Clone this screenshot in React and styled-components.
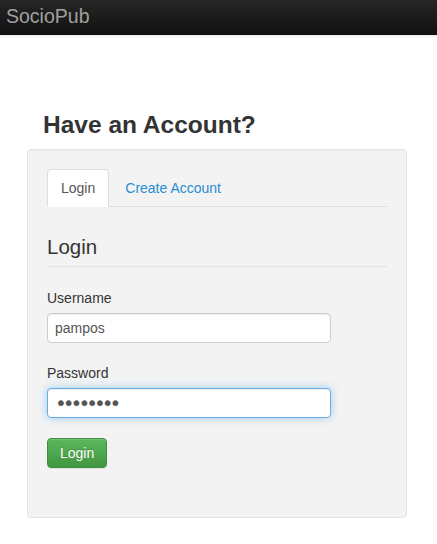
import React, {useEffect, useRef, useState} from "react";
import styled, {createGlobalStyle} from "styled-components";

const GlobalStyle = createGlobalStyle`
body {
    margin: 0;
    background: #fff;
    font-family: "Liberation Sans", Arial, sans-serif;
    font-size: 14px;
    line-height: 20px;
    color: #333;
}
`

const Navbar = styled.div`
height: 35px;
background: linear-gradient(to bottom, #262626 0%, #101010 100%);
box-shadow: 0 1px 3px rgba(0, 0, 0, .12);
display: flex;
align-items: center;
padding-left: 6px;
`

const Brand = styled.a`
font-size: 19.5px;
color: #a0a0a0;
text-decoration: none;
line-height: 24px;
margin-top: -3px;
`

const Main = styled.div`
width: 380px;
padding: 77px 0 0 27px;
`

const Title = styled.h2`
margin: 0 0 10px 16px;
font-size: 24.5px;
line-height: 26.5px;
font-weight: bold;
color: #333;
`

const Well = styled.div`
background: #f3f3f3;
border: 1px solid #e3e3e3;
border-radius: 4px;
padding: 19px 19px 49px;
box-shadow: inset 0 1px 1px rgba(0, 0, 0, .03);
`

const Tabs = styled.ul`
display: flex;
list-style: none;
margin: 0;
padding: 0;
border-bottom: 1px solid #ddd;
`

const Tab = styled.li`
margin-bottom: -1px;
margin-right: 2px;
`

const TabLink = styled.a`
display: block;
padding: 8px 13px 8px 13px;
border: 1px solid ${props => props.active ? "#ddd" : "transparent"};
border-bottom-color: ${props => props.active ? "#fff" : "transparent"};
border-radius: 4px 4px 0 0;
background: ${props => props.active ? "#fff" : "transparent"};
color: ${props => props.active ? "#555" : "#2a8dd4"};
text-decoration: none;
cursor: pointer;
`

const Legend = styled.h3`
margin: 29px 0 0;
padding-bottom: 8px;
font-size: 20.5px;
line-height: 22.5px;
font-weight: normal;
color: #333;
border-bottom: 1px solid #e2e2e2;
`

const Form = styled.form`
display: flex;
flex-direction: column;
align-items: flex-start;
padding-top: 21px;
gap: 20px;
`

const Field = styled.div`
display: flex;
flex-direction: column;
gap: 5px;
`

const Label = styled.label`
font-size: 14px;
line-height: 20px;
color: #333;
`

const Input = styled.input`
box-sizing: border-box;
width: 284px;
height: 30px;
padding: 0 7px;
font-family: ${props => props.type === "password" ? `"DejaVu Sans", sans-serif` : `"Liberation Sans", Arial, sans-serif`};
font-size: ${props => props.type === "password" ? "20px" : "14px"};
letter-spacing: ${props => props.type === "password" ? "-4px" : "normal"};
color: #555;
background: #fff;
border: 1px solid ${props => props.focused ? "#66afe9" : "#ccc"};
border-radius: 4px;
outline: none;
box-shadow: ${props => props.focused
    ? "inset 0 1px 1px rgba(0,0,0,.075), 0 0 8px rgba(102,175,233,.6)"
    : "inset 0 1px 1px rgba(0,0,0,.075)"};
caret-color: #333;
`

const Button = styled.button`
height: 30px;
padding: 0 12px;
font-family: "Liberation Sans", Arial, sans-serif;
font-size: 14px;
color: #fff;
background: linear-gradient(to bottom, #5cb85c 0%, #419641 100%);
border: 1px solid #3e8f3e;
border-radius: 4px;
text-shadow: 0 -1px 0 rgba(0, 0, 0, .2);
box-shadow: inset 0 1px 0 rgba(255,255,255,.15), 0 1px 1px rgba(0,0,0,.075);
cursor: pointer;
`

export default function App() {
    const [tab, setTab] = useState("login");
    const [Values, setValues] = useState({username: "pampos", password: "12345678"});
    const passwordRef = useRef(null);

    useEffect(() => {
        const el = passwordRef.current;
        if (el) {
            el.focus();
            el.setSelectionRange(el.value.length, el.value.length);
        }
    }, []);

    const handleChange = event => {
        setValues({...Values, [event.target.name]: event.target.value})
    }

    return (
        <>
        <GlobalStyle/>
        <Navbar>
            <Brand href="#">SocioPub</Brand>
        </Navbar>
        <Main>
            <Title>Have an Account?</Title>
            <Well>
                <Tabs>
                    <Tab><TabLink active={tab === "login"} onClick={() => setTab("login")}>Login</TabLink></Tab>
                    <Tab><TabLink active={tab === "create"} onClick={() => setTab("create")}>Create Account</TabLink></Tab>
                </Tabs>
                <Legend>Login</Legend>
                <Form onSubmit={e => e.preventDefault()}>
                    <Field>
                        <Label htmlFor="username">Username</Label>
                        <Input id="username" name="username" value={Values.username} onChange={handleChange}/>
                    </Field>
                    <Field>
                        <Label htmlFor="password">Password</Label>
                        <Input id="password" type="password" name="password" focused ref={passwordRef}
                            value={Values.password} onChange={handleChange}/>
                    </Field>
                    <Button type="submit">Login</Button>
                </Form>
            </Well>
        </Main>
        </>
    )
}
